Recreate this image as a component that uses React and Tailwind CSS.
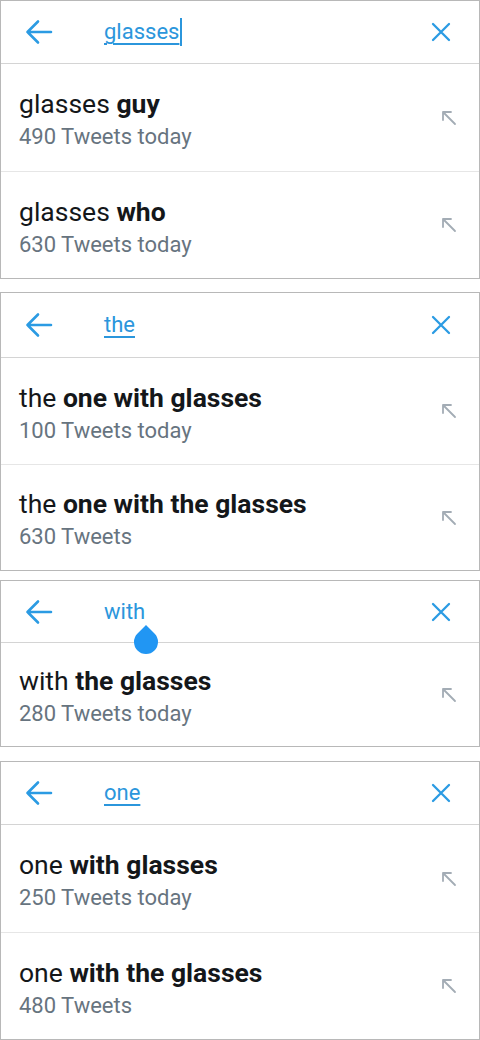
const panels = [
  {
    query: 'glasses',
    cursor: true,
    gap: 'mt-0',
    header: 'h-[63px]',
    rowH: ['h-[107px]', 'h-[107px]'],
    rows: [
      { plain: 'glasses', bold: 'guy', sub: '490 Tweets today' },
      { plain: 'glasses', bold: 'who', sub: '630 Tweets today' },
    ],
  },
  {
    query: 'the',
    gap: 'mt-[13px]',
    header: 'h-[65px]',
    rowH: ['h-[106px]', 'h-[106px]'],
    rows: [
      { plain: 'the', bold: 'one with glasses', sub: '100 Tweets today' },
      { plain: 'the', bold: 'one with the glasses', sub: '630 Tweets' },
    ],
  },
  {
    query: 'with',
    handle: true,
    gap: 'mt-[9px]',
    header: 'h-[62px]',
    rowH: ['h-[103px]'],
    rows: [{ plain: 'with', bold: 'the glasses', sub: '280 Tweets today' }],
  },
  {
    query: 'one',
    gap: 'mt-[14px]',
    header: 'h-[63px]',
    rowH: ['h-[107px]', 'h-[107px]'],
    rows: [
      { plain: 'one', bold: 'with glasses', sub: '250 Tweets today' },
      { plain: 'one', bold: 'with the glasses', sub: '480 Tweets' },
    ],
  },
];

function BackArrow() {
  return (
    <svg width="28" height="28" viewBox="0 0 28 28" fill="none" stroke="#2b9be3" strokeWidth="2.6" strokeLinecap="round" strokeLinejoin="round">
      <path d="M26 14H2.5M13 3.5L2.5 14L13 24.5" />
    </svg>
  );
}

function CloseIcon() {
  return (
    <svg width="20" height="20" viewBox="0 0 20 20" fill="none" stroke="#2b9be3" strokeWidth="2.3" strokeLinecap="round">
      <path d="M2 2L18 18M18 2L2 18" />
    </svg>
  );
}

function FillArrow() {
  return (
    <svg width="16" height="16" viewBox="0 0 16 16" fill="none" stroke="#a3acb5" strokeWidth="1.8" strokeLinecap="round" strokeLinejoin="round">
      <path d="M14 14L2 2M2 10V2H10" />
    </svg>
  );
}

function Panel({ query, cursor, handle, rows, gap, header, rowH }) {
  return (
    <div className={`${gap} border border-[#b8b8b8] bg-white`}>
      <div className={`relative flex ${header} items-center border-b border-[#d4d4d4] pl-[24px] pr-[28px]`}>
        <BackArrow />
        <div className="ml-[51px] flex flex-1 items-center">
          <span
            className={`text-[22px] leading-none text-[#2b96dc] ${handle ? '' : 'underline decoration-[1.5px] underline-offset-[4px]'}`}
          >
            {query}
          </span>
          {cursor && <span className="ml-px h-[28px] w-[2px] bg-[#2b96dc]" />}
        </div>
        <CloseIcon />
        {handle && (
          <div className="absolute bottom-[-12px] left-[133px] h-[24px] w-[24px] rotate-45 rounded-full rounded-tl-none bg-[#2196f3]" />
        )}
      </div>
      {rows.map((row, i) => (
        <div
          key={i}
          className={`flex ${rowH[i]} items-center pl-[18px] pr-[22px] ${i > 0 ? 'border-t border-[#e6e6e6]' : ''}`}
        >
          <div className="flex-1 pt-[4px]">
            <div className="text-[26.5px] leading-[31px] text-[#14171a]">
              {row.plain} <span className="font-bold">{row.bold}</span>
            </div>
            <div className="mt-[4px] text-[22px] leading-[28px] text-[#67747f]">{row.sub}</div>
          </div>
          <FillArrow />
        </div>
      ))}
    </div>
  );
}

export default function App() {
  return (
    <div className="flex min-h-screen w-[480px] flex-col bg-white font-['Roboto',sans-serif]">
      {panels.map((p) => (
        <Panel key={p.query} {...p} />
      ))}
    </div>
  );
}
